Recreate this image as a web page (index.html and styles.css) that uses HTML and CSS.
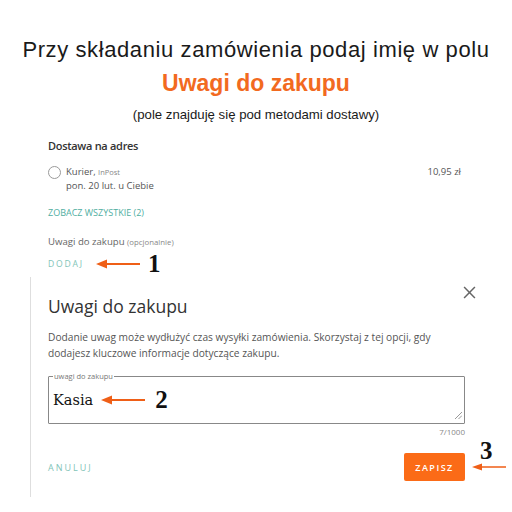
FILE: index.html
```html
<!DOCTYPE html>
<html lang="pl">
<head>
  <meta charset="UTF-8">
  <meta name="viewport" content="width=device-width, initial-scale=1.0">
  <title>Uwagi do zakupu</title>
  <link rel="stylesheet" href="styles.css">
</head>
<body>
  <header class="intro">
    <h1>Przy składaniu zamówienia podaj imię w polu</h1>
    <h2>Uwagi do zakupu</h2>
    <p>(pole znajduję się pod metodami dostawy)</p>
  </header>

  <section class="delivery">
    <h3>Dostawa na adres</h3>
    <div class="option">
      <span class="radio"></span>
      <div class="option-text">
        <div>Kurier, <small>InPost</small></div>
        <div>pon. 20 lut. u Ciebie</div>
      </div>
      <div class="price">10,95 zł</div>
    </div>
    <a class="link-all">ZOBACZ WSZYSTKIE (2)</a>
    <div class="notes-label">Uwagi do zakupu <small>(opcjonalnie)</small></div>
    <div class="step-row">
      <a class="link-add">DODAJ</a>
      <svg class="arrow arrow-1" viewBox="0 0 44 10"><path d="M0 5 L11 0.5 L11 4 L44 4 L44 6 L11 6 L11 9.5 Z"/></svg>
      <span class="step">1</span>
    </div>
  </section>

  <section class="modal">
    <div class="modal-head">
      <h2>Uwagi do zakupu</h2>
      <button class="close" aria-label="Zamknij">
        <svg viewBox="0 0 12 12"><path d="M1 1 L11 11 M11 1 L1 11"/></svg>
      </button>
    </div>
    <p class="modal-desc">Dodanie uwag może wydłużyć czas wysyłki zamówienia. Skorzystaj z tej opcji, gdy dodajesz kluczowe informacje dotyczące zakupu.</p>
    <fieldset class="note-field">
      <legend>uwagi do zakupu</legend>
      <div class="note-value">
        <span class="typed">Kasia</span>
        <svg class="arrow arrow-2" viewBox="0 0 44 10"><path d="M0 5 L11 0.5 L11 4 L44 4 L44 6 L11 6 L11 9.5 Z"/></svg>
        <span class="step">2</span>
        <svg class="grip" viewBox="0 0 8 8"><path d="M8 1 L1 8 M8 4.5 L4.5 8"/></svg>
      </div>
    </fieldset>
    <div class="counter">7/1000</div>
    <div class="modal-actions">
      <a class="link-cancel">ANULUJ</a>
      <div class="save-wrap">
        <button class="save">ZAPISZ</button>
        <span class="step step-3">3</span>
        <svg class="arrow arrow-3" viewBox="0 0 34 8"><path d="M0 4 L10 0.5 L10 3.3 L34 3.3 L34 4.7 L10 4.7 L10 7.5 Z"/></svg>
      </div>
    </div>
  </section>
</body>
</html>
```

FILE: styles.css
```css
:root {
  --orange: #f26a1f;
  --orange-btn: #fb6b17;
  --teal: #4fae9f;
  --teal-light: #7fc4b8;
  --text: #333333;
  --gray: #666666;
}

* {
  box-sizing: border-box;
  margin: 0;
  padding: 0;
}

body {
  width: 512px;
  height: 512px;
  overflow: hidden;
  background: #ffffff;
  color: var(--text);
  font-family: 'Open Sans', 'Liberation Sans', sans-serif;
}

/* naglowek z instrukcja */
.intro {
  padding-top: 36px;
  text-align: center;
  font-family: 'Liberation Sans', Arial, sans-serif;
}

.intro h1 {
  font-size: 22px;
  font-weight: normal;
  line-height: 28px;
  letter-spacing: 0.6px;
  color: #1a1a1a;
}

.intro h2 {
  margin-top: 5px;
  font-size: 23px;
  font-weight: bold;
  line-height: 28px;
  color: var(--orange);
}

.intro p {
  margin-top: 9px;
  font-size: 13.2px;
  line-height: 18px;
  color: #1a1a1a;
}

/* sekcja dostawy */
.delivery {
  padding: 0 51px 0 48px;
}

.delivery h3 {
  margin-top: 14px;
  font-size: 11px;
  font-weight: 600;
  line-height: 16px;
  letter-spacing: -0.3px;
  color: #333;
}

.option {
  display: flex;
  align-items: flex-start;
  margin-top: 11px;
  font-size: 9.5px;
  line-height: 14px;
  color: #555;
}

.radio {
  width: 13px;
  height: 13px;
  margin-top: 0.5px;
  margin-right: 5px;
  border: 1px solid #9a9a9a;
  border-radius: 50%;
}

.option-text small {
  font-size: 7.5px;
  color: #888;
}

.price {
  margin-left: auto;
}

.link-all {
  display: block;
  margin-top: 13px;
  font-size: 9px;
  line-height: 14px;
  color: var(--teal);
}

.notes-label {
  margin-top: 15px;
  font-size: 9.6px;
  line-height: 14px;
  color: #666;
}

.notes-label small {
  font-size: 7.8px;
  color: #888;
}

.step-row {
  display: flex;
  align-items: center;
  height: 22px;
  margin-top: 4px;
}

.link-add {
  font-size: 8.6px;
  letter-spacing: 1.8px;
  color: var(--teal-light);
}

.arrow {
  fill: #ef5f17;
}

.arrow-1 {
  width: 44px;
  height: 10px;
  margin-left: 12px;
}

.step {
  font-family: 'Liberation Serif', 'Times New Roman', serif;
  font-weight: bold;
  font-size: 25px;
  line-height: 22px;
  color: #111;
}

.step-row .step {
  margin-left: 8px;
}

/* okno uwag */
.modal {
  margin: 2px 0 0 30px;
  padding: 16px 47px 16px 17px;
  border-left: 1px solid #dedede;
}

.modal-head {
  display: flex;
  justify-content: space-between;
  align-items: flex-start;
}

.modal-head h2 {
  font-size: 17.5px;
  font-weight: normal;
  line-height: 26px;
  color: #333;
}

.close {
  width: 13px;
  height: 13px;
  margin: -7px -11px 0 0;
  border: none;
  background: none;
}

.close svg {
  display: block;
  width: 13px;
  height: 13px;
  stroke: #666;
  stroke-width: 1.4;
}

.modal-desc {
  margin-top: 10px;
  font-size: 10.2px;
  line-height: 16px;
  color: #555;
}

.note-field {
  margin-top: 10px;
  height: 53px;
  padding: 0 2px 0 4px;
  border: 1.5px solid #888;
  border-radius: 1px;
}

.note-field legend {
  padding: 0 1px;
  font-size: 7.5px;
  line-height: 10px;
  color: #777;
}

.note-value {
  display: flex;
  align-items: center;
  height: 38px;
}

.typed {
  font-family: 'DejaVu Serif', 'Liberation Serif', serif;
  font-size: 14.5px;
  color: #111;
}

.arrow-2 {
  width: 44px;
  height: 10px;
  margin-left: 8px;
}

.note-value .step {
  margin-left: 10px;
}

.grip {
  align-self: flex-end;
  width: 8px;
  height: 8px;
  margin-left: auto;
  stroke: #999;
  stroke-width: 1;
}

.counter {
  margin-top: 2px;
  text-align: right;
  font-size: 8px;
  line-height: 12px;
  color: #888;
}

.modal-actions {
  display: flex;
  justify-content: space-between;
  align-items: center;
  margin-top: 15px;
}

.link-cancel {
  font-size: 9px;
  letter-spacing: 2px;
  color: var(--teal-light);
}

.save-wrap {
  position: relative;
}

.save {
  display: block;
  width: 61px;
  height: 28px;
  border: none;
  border-radius: 2px;
  background: var(--orange-btn);
  color: #fff;
  font-family: 'Open Sans', sans-serif;
  font-size: 9px;
  font-weight: 600;
  letter-spacing: 1.5px;
}

/* adnotacje na zrzucie */
.step-3 {
  position: absolute;
  left: 76px;
  top: -13px;
}

.arrow-3 {
  position: absolute;
  left: 68px;
  top: 10px;
  width: 34px;
  height: 8px;
}
```
